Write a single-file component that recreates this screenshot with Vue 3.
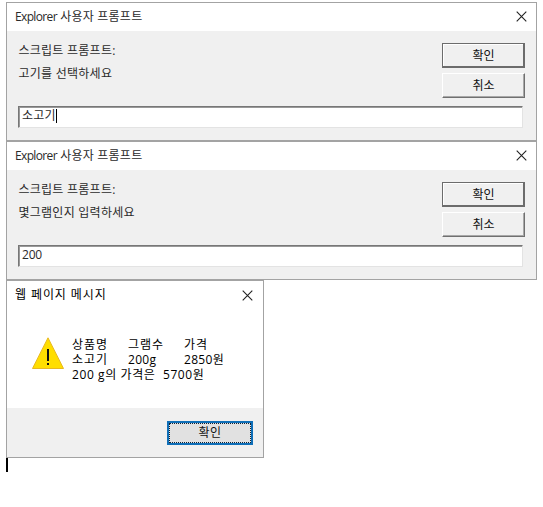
<script setup>
const prompts = [
  { message: '고기를 선택하세요', value: '소고기', focused: true },
  { message: '몇그램인지 입력하세요', value: '200', focused: false },
]
</script>

<template>
  <main class="page">
    <section v-for="p in prompts" :key="p.message" class="dialog prompt">
      <header class="titlebar">
        <span class="title"><span class="latin">Explorer</span> 사용자 프롬프트</span>
        <svg class="close" viewBox="0 0 11 11"><path d="M.7 .7 10.3 10.3M10.3 .7 .7 10.3" /></svg>
      </header>
      <div class="content">
        <div class="row">
          <div class="labels">
            <div>스크립트 프롬프트:</div>
            <div>{{ p.message }}</div>
          </div>
          <div class="actions">
            <button class="btn primary">확인</button>
            <button class="btn">취소</button>
          </div>
        </div>
        <div class="field" :class="{ digits: !p.focused }">
          <span>{{ p.value }}</span><i v-if="p.focused" class="caret"></i>
        </div>
      </div>
    </section>

    <section class="dialog alert">
      <header class="titlebar">
        <span class="title">웹 페이지 메시지</span>
        <svg class="close" viewBox="0 0 11 11"><path d="M.7 .7 10.3 10.3M10.3 .7 .7 10.3" /></svg>
      </header>
      <div class="message">
        <svg class="warning" viewBox="0 0 32 32">
          <path d="M16 .8 31.5 31.5H.5Z" fill="#ffde00" stroke="#e8b820" />
          <path d="M15 12h2v12h-2ZM15 26h2v2h-2Z" fill="#111" />
        </svg>
        <div class="lines">
          <div class="cols wide"><span>상품명</span><span>그램수</span><span>가격</span></div>
          <div class="cols"><span class="wide">소고기</span><span>200g</span><span>2850원</span></div>
          <div class="total">200 g의 가격은&nbsp; 5700원</div>
        </div>
      </div>
      <footer class="footer"><button class="ok"><span>확인</span></button></footer>
    </section>
    <div class="text-cursor"></div>
  </main>
</template>

<style>
body { background: #fff; }
</style>

<style scoped>
.page {
  box-sizing: border-box;
  width: 543px;
  height: 507px;
  padding: 2px 6px 0;
  font: 12px/16px "Open Sans", "Noto Sans CJK KR", sans-serif;
  color: #2a2a2a;
}
.page * { box-sizing: border-box; }
.dialog { border: 1px solid #a3a3a3; background: #f0f0f0; display: flex; flex-direction: column; }
.prompt { width: 531px; height: 139px; }
.titlebar {
  display: flex;
  justify-content: space-between;
  align-items: center;
  background: #fff;
  height: 28px;
  padding: 0 9px 0 8px;
  white-space: nowrap;
}
.title { letter-spacing: 0.22px; }
.latin { letter-spacing: -0.65px; }
.close { width: 11px; height: 11px; margin-bottom: 1px; fill: none; stroke: #222; stroke-width: 1.1; }
.content { padding: 12px 12px 0 12px; }
.row { display: flex; justify-content: space-between; height: 63px; }
.labels { display: flex; flex-direction: column; gap: 7px; letter-spacing: 0.25px; margin-left: -0.5px; }
.actions { display: flex; flex-direction: column; gap: 5px; margin-right: -1px; }
button { font: inherit; color: #111; padding: 0; margin: 0; border-radius: 0; }
.btn {
  width: 83px;
  height: 25px;
  background: #f0f0f0;
  border: 1px solid;
  border-color: #fff #707070 #707070 #fff;
  box-shadow: inset -1px -1px #a8a8a8;
  line-height: 20px;
}
.primary { border-color: #6c6c6c; box-shadow: inset -1px -1px #6c6c6c, inset 1px 1px #fff; }
.field {
  display: flex;
  width: 505px;
  height: 22px;
  margin-left: -1px;
  background: #fff;
  border: 1px solid;
  border-color: #777 #e3e3e3 #e3e3e3 #777;
  box-shadow: inset 1px 1px #999;
  padding: 1px 0 0 3px;
  letter-spacing: 0.25px;
}
.digits { letter-spacing: -0.2px; }
.caret { width: 1px; height: 14px; background: #000; margin-top: 1px; }
.alert { width: 258px; height: 178px; background: #fff; color: #000; }
.alert .titlebar { padding-right: 10px; }
.alert .title { letter-spacing: 0.9px; }
.alert .close { margin-bottom: 0; }
.message { display: flex; height: 99px; padding: 28px 0 0 25px; gap: 8px; }
.warning { width: 32px; height: 32px; }
.lines { line-height: 15px; white-space: nowrap; letter-spacing: 0.3px; }
.cols { display: grid; grid-template-columns: 56px 56px auto; }
.wide { letter-spacing: 0.95px; }
.total { letter-spacing: 0.6px; }
.footer { flex: 1; background: #f0f0f0; display: flex; justify-content: flex-end; padding: 13px 10px 0 0; }
.ok { width: 86px; height: 24px; background: #e1e1e1; border: 2px solid #0f6fb8; line-height: 17px; display: flex; }
.ok span { flex: 1; height: 20px; border: 1px dotted #123; letter-spacing: 0.5px; }
.text-cursor { width: 2px; height: 14px; background: #000; }
</style>
